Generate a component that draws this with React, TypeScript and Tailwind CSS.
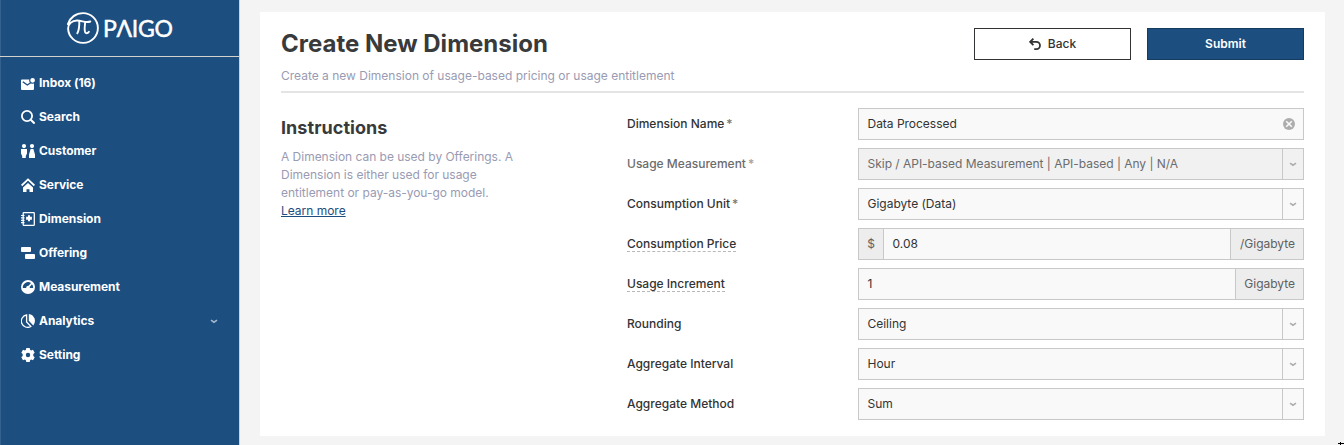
import React from "react";

type IconProps = { children: React.ReactNode };

function NavIcon({ children }: IconProps) {
  return (
    <svg viewBox="0 0 14 14" className="h-[14px] w-[14px] shrink-0" fill="none" stroke="none">
      {children}
    </svg>
  );
}

const icons = {
  inbox: (
    <NavIcon>
      <path fill="#fff" d="M1 3.500h12V13a1 1 0 0 1-1 1H1a1 1 0 0 1-1-1V4.500a1 1 0 0 1 1-1Z" />
      <path d="M1.800 5.800 6.300 9l4.500-3" stroke="#1c4e80" strokeWidth="1.400" />
      <circle cx="11.600" cy="4.300" r="2.900" fill="#fff" stroke="#1c4e80" strokeWidth="1.100" />
    </NavIcon>
  ),
  search: (
    <NavIcon>
      <circle cx="6" cy="6" r="5.100" stroke="#fff" strokeWidth="1.800" />
      <path d="m9.800 9.800 3.800 3.800" stroke="#fff" strokeWidth="2" />
    </NavIcon>
  ),
  customer: (
    <NavIcon>
      <circle cx="3" cy="2.100" r="2.100" fill="#fff" />
      <circle cx="11" cy="2.100" r="2.100" fill="#fff" />
      <path fill="#fff" d="M0 5h6v4.500L4.800 12v2H1.200v-2L0 9.500ZM9.600 5h2.800L14 10.500V14H8v-3.500Z" />
    </NavIcon>
  ),
  service: (
    <NavIcon>
      <path d="M.6 7.500 7 1.400l6.400 6.100" stroke="#fff" strokeWidth="1.800" />
      <path fill="#fff" d="M7 4.900 12 9.600V14H8.500v-2.800h-3V14H2V9.600Z" />
    </NavIcon>
  ),
  dimension: (
    <NavIcon>
      <rect x="2.200" y=".7" width="11.100" height="12.600" rx=".6" stroke="#fff" strokeWidth="1.300" />
      <path d="M0 3.500h3.500M0 5.900h3.500M0 8.300h3.500M0 10.700h3.500" stroke="#fff" strokeWidth="1.200" />
      <path fill="#fff" d="M7 3.200h2v1.500h1.900v3H9v1.500H7V7.700H5.100v-3H7Z" />
    </NavIcon>
  ),
  offering: (
    <NavIcon>
      <rect x="0" y="1" width="10" height="5" rx="1" fill="#fff" />
      <rect x="4" y="8" width="10" height="5" rx="1" fill="#fff" />
    </NavIcon>
  ),
  measurement: (
    <NavIcon>
      <circle cx="7" cy="7" r="7" fill="#fff" />
      <path fill="#1c4e80" d="M1.800 8A5.300 5.300 0 0 1 10 3L7.600 5.800A2 2 0 0 0 5.200 8ZM11 4.300A5 5 0 0 1 12.200 8H8.900L8.600 6.900Z" />
    </NavIcon>
  ),
  analytics: (
    <NavIcon>
      <path d="M5.600 1A6.200 6.200 0 1 0 9.800 12.400L5.600 8Z" stroke="#fff" strokeWidth="1.300" />
      <path fill="#fff" d="M7.800 0A7 7 0 0 1 12.300 11.400L7.800 6.800Z" />
    </NavIcon>
  ),
  setting: (
    <NavIcon>
      <path
        fill="#fff"
        fillRule="evenodd"
        d="M5.300 0h3.400l.4 1.800 1 .6 1.900-.6 1.700 2.900L12.300 6v2l1.400 1.300-1.700 2.900-1.900-.6-1 .6-.4 1.800H5.300l-.4-1.800-1-.6-1.900.6L.3 9.300 1.700 8V6L.3 4.700 2 1.800l1.900.6 1-.6ZM7 4.800a2.200 2.200 0 1 0 0 4.400 2.200 2.200 0 0 0 0-4.400Z"
      />
    </NavIcon>
  ),
};

const nav = [
  { label: "Inbox (16)", icon: icons.inbox },
  { label: "Search", icon: icons.search },
  { label: "Customer", icon: icons.customer },
  { label: "Service", icon: icons.service },
  { label: "Dimension", icon: icons.dimension },
  { label: "Offering", icon: icons.offering },
  { label: "Measurement", icon: icons.measurement },
  { label: "Analytics", icon: icons.analytics, expandable: true },
  { label: "Setting", icon: icons.setting },
];

function Chevron({ className }: { className: string }) {
  return (
    <svg viewBox="0 0 8 5" className={`h-[5px] w-[8px] ${className}`} fill="none" stroke="currentColor" strokeWidth="1.600">
      <path d="m1 1.200 3 2L7 1.200" />
    </svg>
  );
}

function Logo() {
  return (
    <div className="flex h-14 items-center pl-[66px]">
      <svg viewBox="0 0 32 32" className="h-8 w-8 shrink-0" fill="none" stroke="#fff" strokeLinecap="round">
        <path d="M.900 12C3 5.500 9 1.100 16 1.100a14.900 14.900 0 1 1-14.900 15.500c0-4.400 3.500-8.100 9-8.100 5 0 8.500 2.700 13.200 1" strokeWidth="1.900" />
        <path d="M12.300 9.200c.1 5-.2 9-2 12M18.200 10.200c-.5 4-1.400 11 1.300 11 1.100 0 1.800-.5 2.400-1.500" strokeWidth="1.900" />
      </svg>
      <span className="ml-[4px] font-[Lato] text-[23px] leading-none tracking-[-0.3px] text-white [-webkit-text-stroke:0.5px_white]">PΛIGO</span>
    </div>
  );
}

function Sidebar() {
  return (
    <aside className="flex w-60 shrink-0 flex-col border-r border-l border-r-[#d4d2cd] border-l-[#346190] bg-[#1c4e80]">
      <Logo />
      <nav className="-ml-px flex flex-col border-t border-[#d4d2cd] pt-[9px]">
        {nav.map((n) => (
          <a key={n.label} className="flex h-[34px] items-center pr-[21px] pl-[21px] text-[12px] font-bold tracking-[-0.05px] text-white">
            {n.icon}
            <span className="ml-1">{n.label}</span>
            {n.expandable && <Chevron className="ml-auto text-[#a4b8cc]" />}
          </a>
        ))}
      </nav>
    </aside>
  );
}

type Row = {
  label: string;
  value: string;
  required?: boolean;
  disabled?: boolean;
  hint?: boolean;
  clearable?: boolean;
  select?: boolean;
  prefix?: string;
  suffix?: string;
};

const rows: Row[] = [
  { label: "Dimension Name", value: "Data Processed", required: true, clearable: true },
  { label: "Usage Measurement", value: "Skip / API-based Measurement | API-based | Any | N/A", required: true, disabled: true, select: true },
  { label: "Consumption Unit", value: "Gigabyte (Data)", required: true, select: true },
  { label: "Consumption Price", value: "0.08", hint: true, prefix: "$", suffix: "/Gigabyte" },
  { label: "Usage Increment", value: "1", hint: true, suffix: "Gigabyte" },
  { label: "Rounding", value: "Ceiling", select: true },
  { label: "Aggregate Interval", value: "Hour", select: true },
  { label: "Aggregate Method", value: "Sum", select: true },
];

function FormRow({ row }: { row: Row }) {
  return (
    <div className="flex h-8 items-center">
      <div className={`w-[231px] text-[12px] font-medium ${row.disabled ? "text-[#6b6c6d]" : "text-[#323334]"}`}>
        <span className={row.hint ? "border-b border-dashed border-[#b8b8b8]" : ""}>{row.label}</span>
        {row.required && <span className={row.disabled ? "ml-[2px] text-[#a0a0a0]" : "ml-[2px] text-[#777]"}>*</span>}
      </div>
      <div
        className={`flex h-8 w-[446px] items-stretch border border-[#c8c8c8] text-[12px] leading-[30px] tracking-[-0.02px] ${
          row.disabled ? "bg-[#f1f1f1] text-[#6b6c6d]" : "bg-[#f9f9f9] text-[#323334]"
        }`}
      >
        {row.prefix && <span className="w-[25px] border-r border-[#c8c8c8] bg-[#ededed] text-center text-[#5f6061]">{row.prefix}</span>}
        <span className="flex-1 pl-[8.500px]">{row.value}</span>
        {row.clearable && (
          <svg viewBox="0 0 12 12" className="mr-2 h-3 w-3 self-center">
            <circle cx="6" cy="6" r="6" fill="#adadad" />
            <path d="m3.200 3.200 5.600 5.600m0-5.600L3.200 8.800" stroke="#f9f9f9" strokeWidth="1.600" />
          </svg>
        )}
        {row.suffix && (
          <span className={`border-l border-[#c8c8c8] bg-[#ededed] pr-2 text-right text-[#5f6061] ${row.prefix ? "w-[73px]" : "w-[68px]"}`}>
            {row.suffix}
          </span>
        )}
        {row.select && (
          <span className="flex w-[21px] items-center justify-center border-l border-[#c8c8c8]">
            <Chevron className="text-[#adadad]" />
          </span>
        )}
      </div>
    </div>
  );
}

export default function App() {
  return (
    <div className="relative flex h-[445px] w-[1344px] overflow-hidden bg-[#f4f4f4] font-[Inter,sans-serif]">
      <Sidebar />
      <main className="mt-3 ml-5 h-[424px] w-[1065px] bg-white px-[21px] pt-4">
        <header className="h-[65px] border-b-2 border-[#e4e4e4]">
          <div className="flex items-center justify-between">
            <h1 className="text-[24px] leading-8 font-bold text-[#393a3b]">Create New Dimension</h1>
            <div className="flex gap-4">
              <button className="flex h-8 w-[157px] items-center justify-center gap-[7px] border border-[#323334] text-[12px] font-medium text-[#323334]">
                <svg viewBox="0 0 12 12" className="h-3 w-3" fill="none" stroke="currentColor" strokeWidth="1.800">
                  <path d="M4.400.6 1.200 3.900l3.200 3.300M1.400 3.900h6a3.600 3.600 0 0 1 0 7.200H5.200" />
                </svg>
                Back
              </button>
              <button className="h-8 w-[157px] border border-[#153b60] bg-[#1c4e80] text-[12px] font-semibold text-white">Submit</button>
            </div>
          </div>
          <p className="mt-[7px] text-[12px] leading-[18px] text-[#999bb3]">Create a new Dimension of usage-based pricing or usage entitlement</p>
        </header>
        <div className="flex pt-[15px]">
          <section className="w-[346px] shrink-0 pt-2">
            <h2 className="text-[18px] leading-6 font-bold tracking-[0.05px] text-[#393a3b]">Instructions</h2>
            <p className="mt-2 w-[240px] text-[12px] leading-[18px] tracking-[-0.02px] text-[#999bb3]">
              A Dimension can be used by Offerings. A Dimension is either used for usage entitlement or pay-as-you-go model.
              <br />
              <a className="text-[#1c4e80] underline">Learn more</a>
            </p>
          </section>
          <section className="flex flex-col gap-2">
            {rows.map((r) => (
              <FormRow key={r.label} row={r} />
            ))}
          </section>
        </div>
      </main>
      <svg viewBox="0 0 6 4" className="absolute right-0 bottom-0 h-1 w-1.5" fill="#000">
        <path d="M0 2h2V1h1v1h3v1H3v1H2V3H0Z" />
      </svg>
    </div>
  );
}
